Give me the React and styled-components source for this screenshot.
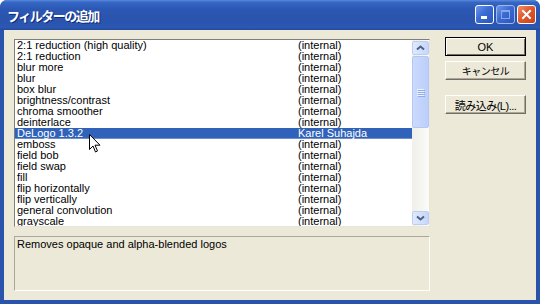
import React from "react";
import styled, { createGlobalStyle } from "styled-components";

const GlobalStyle = createGlobalStyle`
  html, body {
    margin: 0;
    padding: 0;
    background: #fff;
  }
`;

const filters = [
  ["2:1 reduction (high quality)", "(internal)"],
  ["2:1 reduction", "(internal)"],
  ["blur more", "(internal)"],
  ["blur", "(internal)"],
  ["box blur", "(internal)"],
  ["brightness/contrast", "(internal)"],
  ["chroma smoother", "(internal)"],
  ["deinterlace", "(internal)"],
  ["DeLogo 1.3.2", "Karel Suhajda"],
  ["emboss", "(internal)"],
  ["field bob", "(internal)"],
  ["field swap", "(internal)"],
  ["fill", "(internal)"],
  ["flip horizontally", "(internal)"],
  ["flip vertically", "(internal)"],
  ["general convolution", "(internal)"],
  ["grayscale", "(internal)"],
];

const Window = styled.div`
  width: 540px;
  height: 304px;
  display: flex;
  flex-direction: column;
  background: #2a53ab;
  border-radius: 7px 7px 0 0;
  overflow: hidden;
`;

const TitleBar = styled.div`
  height: 30px;
  flex: none;
  display: flex;
  align-items: center;
  justify-content: space-between;
  padding: 0 4px 0 7px;
  background: linear-gradient(
    to bottom,
    #5a88dc 0%,
    #3466c4 8%,
    #2c58b4 30%,
    #2a54ad 70%,
    #2b58b3 92%,
    #24499c 100%
  );
`;

const Title = styled.div`
  font-family: "Noto Sans CJK JP", sans-serif;
  font-weight: bold;
  font-size: 13px;
  letter-spacing: -1.5px;
  color: #fff;
  text-shadow: 1px 1px 0 #10287a;
`;

const Controls = styled.div`
  display: flex;
  gap: 2px;
  margin-top: -1px;
`;

const CtrlButton = styled.div`
  width: 19px;
  height: 19px;
  border: 1px solid #fff;
  border-radius: 3px;
  display: flex;
  align-items: center;
  justify-content: center;
  box-sizing: border-box;
  background: ${({ $close }) =>
    $close
      ? "linear-gradient(135deg, #f0906a 0%, #e0592e 45%, #c9421a 100%)"
      : "linear-gradient(135deg, #6d98ec 0%, #3a6ad3 45%, #2a56bd 100%)"};
  border-color: ${({ $disabled }) => ($disabled ? "#9fb6e6" : "#fff")};
`;

const Client = styled.div`
  flex: 1;
  margin: 0 4px 4px;
  background: #ece9d8;
  display: flex;
  gap: 15px;
  padding: 7px 10px 9px 10px;
`;

const LeftCol = styled.div`
  width: 416px;
  display: flex;
  flex-direction: column;
  gap: 9px;
  padding-top: 2px;
`;

const ListBox = styled.div`
  position: relative;
  height: 188px;
  box-sizing: border-box;
  border: 1px solid;
  border-color: #7f7e78 #e8e6dc #e8e6dc #7f7e78;
  background: #fff;
  display: flex;
`;

const Rows = styled.div`
  flex: 1;
  overflow: hidden;
`;

const Row = styled.div`
  height: 11px;
  display: grid;
  grid-template-columns: 281px 1fr;
  padding-left: 2px;
  font-family: "Liberation Sans", "Noto Sans CJK JP", sans-serif;
  font-size: 11px;
  line-height: 11px;
  white-space: nowrap;
  color: ${({ $selected }) => ($selected ? "#ffffff" : "#000")};
  background: ${({ $selected }) => ($selected ? "#2f62b8" : "transparent")};
  box-shadow: ${({ $selected }) =>
    $selected ? "inset 0 -1px 0 #6f8fcf" : "none"};
`;

const ScrollBar = styled.div`
  width: 17px;
  display: flex;
  flex-direction: column;
  background: linear-gradient(to right, #f0efe9, #fbfbf8);
  padding: 1px 0;
  box-sizing: border-box;
`;

const ArrowButton = styled.div`
  height: 14px;
  flex: none;
  box-sizing: border-box;
  border: 1px solid #bccff3;
  border-radius: 2px;
  background: linear-gradient(to right, #e0e9fd, #c6d6fb);
  display: flex;
  align-items: center;
  justify-content: center;
`;

const Thumb = styled.div`
  height: 72px;
  flex: none;
  margin-top: 1px;
  box-sizing: border-box;
  border: 1px solid #b3c7f1;
  border-radius: 2px;
  background: linear-gradient(to right, #cbdafd, #bccefa);
  display: flex;
  flex-direction: column;
  align-items: center;
  justify-content: center;
  gap: 1px;
`;

const Grip = styled.div`
  width: 7px;
  height: 1px;
  background: #eef3fe;
  box-shadow: 1px 1px 0 #8caef0;
`;

const Track = styled.div`
  flex: 1;
`;

const Description = styled.div`
  flex: 1;
  box-sizing: border-box;
  border: 1px solid;
  border-color: #aca899 #fff #fff #aca899;
  padding: 1px 2px;
  font-family: "Liberation Sans", sans-serif;
  font-size: 11px;
  line-height: 12px;
  color: #000;
`;

const ButtonCol = styled.div`
  width: 81px;
  display: flex;
  flex-direction: column;
`;

const PushButton = styled.div`
  height: 19px;
  box-sizing: border-box;
  margin-top: ${({ $gap }) => $gap || 0}px;
  display: flex;
  align-items: center;
  justify-content: center;
  font-family: "Liberation Sans", "Noto Sans CJK JP", sans-serif;
  font-size: ${({ $size }) => $size || 11}px;
  letter-spacing: ${({ $spacing }) => $spacing || 0}px;
  color: #000;
  background: #ece9d8;
  border: 1px solid;
  border-color: ${({ $default }) =>
    $default ? "#000" : "#fff #716f64 #716f64 #fff"};
  box-shadow: ${({ $default }) =>
    $default
      ? "inset 1px 1px 0 #fff, inset -1px -1px 0 #716f64"
      : "inset -1px -1px 0 #aca899"};
`;

const Cursor = styled.svg`
  position: absolute;
  left: 74px;
  top: 94px;
`;

const Chevron = ({ down }) => (
  <svg width="9" height="6" viewBox="0 0 9 6">
    <path
      d={down ? "M1 1.5 L4.5 4.5 L8 1.5" : "M1 4.5 L4.5 1.5 L8 4.5"}
      fill="none"
      stroke="#4d6185"
      strokeWidth="2"
    />
  </svg>
);

const App = () => (
  <>
    <GlobalStyle />
    <Window>
      <TitleBar>
        <Title>フィルターの追加</Title>
        <Controls>
          <CtrlButton>
            <svg width="13" height="13" viewBox="0 0 13 13">
              <rect x="3" y="8" width="6" height="3" fill="#fff" />
            </svg>
          </CtrlButton>
          <CtrlButton $disabled>
            <svg width="13" height="13" viewBox="0 0 13 13">
              <rect
                x="2.5"
                y="2.5"
                width="8"
                height="8"
                fill="none"
                stroke="#8aa7e4"
                strokeWidth="1"
              />
              <rect x="2" y="2" width="9" height="2" fill="#8aa7e4" />
            </svg>
          </CtrlButton>
          <CtrlButton $close>
            <svg width="13" height="13" viewBox="0 0 13 13">
              <path
                d="M3 3 L10 10 M10 3 L3 10"
                stroke="#fff"
                strokeWidth="2"
                strokeLinecap="square"
              />
            </svg>
          </CtrlButton>
        </Controls>
      </TitleBar>
      <Client>
        <LeftCol>
          <ListBox>
            <Rows>
              {filters.map(([name, author], i) => (
                <Row key={name} $selected={i === 8}>
                  <span>{name}</span>
                  <span>{author}</span>
                </Row>
              ))}
            </Rows>
            <ScrollBar>
              <ArrowButton>
                <Chevron />
              </ArrowButton>
              <Thumb>
                <Grip />
                <Grip />
                <Grip />
                <Grip />
              </Thumb>
              <Track />
              <ArrowButton>
                <Chevron down />
              </ArrowButton>
            </ScrollBar>
            <Cursor width="13" height="20" viewBox="0 0 13 20">
              <path
                d="M0.5 0.5 L0.5 15.5 L4 12 L6.5 18 L8.5 17 L6 11.2 L11 11.2 Z"
                fill="#fff"
                stroke="#000"
                strokeWidth="1"
              />
            </Cursor>
          </ListBox>
          <Description>Removes opaque and alpha-blended logos</Description>
        </LeftCol>
        <ButtonCol>
          <PushButton $default>OK</PushButton>
          <PushButton $gap={5} $size={10} $spacing={-0.5}>
            キャンセル
          </PushButton>
          <PushButton $gap={15} $size={11} $spacing={-0.5}>
            読み込み(L)...
          </PushButton>
        </ButtonCol>
      </Client>
    </Window>
  </>
);

export default App;
